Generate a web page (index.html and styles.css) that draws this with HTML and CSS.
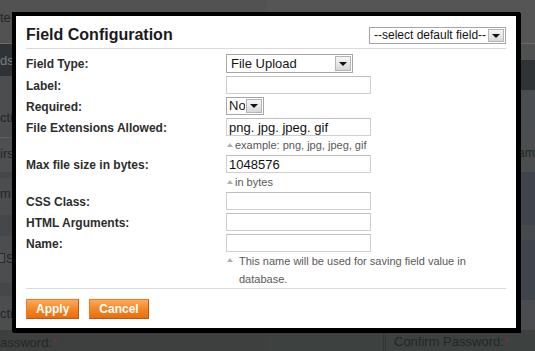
FILE: index.html
```html
<!DOCTYPE html>
<html lang="en">
<head>
  <meta charset="UTF-8" />
  <meta name="viewport" content="width=device-width, initial-scale=1.0"/>
  <title>Field Configuration</title>
  <link rel="stylesheet" href="styles.css">
</head>
<body>
  <!-- dimmed admin page behind the popup -->
  <div class="backdrop">
    <div class="bg-col left">
      <div class="band b-head"><span>te</span></div>
      <div class="band b-tabs"><span class="tab-text">ds</span></div>
      <div class="band b-sect"><span>cti</span></div>
      <div class="band b-first"><span>irs</span></div>
      <div class="band b-gap"></div>
      <div class="band b-name"><span>m</span></div>
      <div class="band b-gap2"></div>
      <div class="band b-check"><span class="check"></span><span>S</span></div>
      <div class="band b-gap3"></div>
      <div class="band b-sect2"><span>cti</span></div>
      <div class="band b-foot"><span>assword:<em>*</em></span></div>
    </div>
    <div class="bg-col right">
      <div class="band r-head"></div>
      <div class="band r-sub"></div>
      <div class="band r-tabs"></div>
      <div class="band r-blue"></div>
      <div class="band r-name"><span>am</span></div>
      <div class="band r-blue2"></div>
      <div class="band r-mid"></div>
      <div class="band r-blue3"></div>
      <div class="band r-low"></div>
      <div class="band r-foot"><span class="confirm">Confirm Password:<em>*</em></span></div>
    </div>
  </div>

  <div class="dialog">
    <div class="dialog-head">
      <h3>Field Configuration</h3>
      <div class="select select-default">
        <span class="select-text">--select default field--</span>
        <span class="select-btn"></span>
      </div>
    </div>

    <div class="form-list">
      <div class="row">
        <label>Field Type:</label>
        <div class="value">
          <div class="select select-type">
            <span class="select-text">File Upload</span>
            <span class="select-btn"></span>
          </div>
        </div>
      </div>
      <div class="row">
        <label>Label:</label>
        <div class="value"><input type="text" class="input-text" value=""></div>
      </div>
      <div class="row">
        <label>Required:</label>
        <div class="value">
          <div class="select select-small">
            <span class="select-text">No</span>
            <span class="select-btn"></span>
          </div>
        </div>
      </div>
      <div class="row has-note">
        <label>File Extensions Allowed:</label>
        <div class="value">
          <input type="text" class="input-text" value="png. jpg. jpeg. gif">
          <p class="note">example: png, jpg, jpeg, gif</p>
        </div>
      </div>
      <div class="row has-note">
        <label>Max file size in bytes:</label>
        <div class="value">
          <input type="text" class="input-text" value="1048576">
          <p class="note">in bytes</p>
        </div>
      </div>
      <div class="row">
        <label>CSS Class:</label>
        <div class="value"><input type="text" class="input-text" value=""></div>
      </div>
      <div class="row">
        <label>HTML Arguments:</label>
        <div class="value"><input type="text" class="input-text" value=""></div>
      </div>
      <div class="row">
        <label>Name:</label>
        <div class="value">
          <input type="text" class="input-text" value="">
          <p class="note note-long">This name will be used for saving field value in database.</p>
        </div>
      </div>
    </div>

    <div class="dialog-foot">
      <button class="btn">Apply</button>
      <button class="btn">Cancel</button>
    </div>
  </div>
</body>
</html>
```

FILE: styles.css
```css
* {
  box-sizing: border-box;
}

html, body {
  margin: 0;
  height: 100%;
}

body {
  position: relative;
  overflow: hidden;
  font-family: 'Liberation Sans', Arial, sans-serif;
  font-size: 12px;
  color: #2f2f2f;
  background: #4b4d4e;
}

/* ---- backdrop ---- */

.backdrop {
  display: flex;
  height: 351px;
  font-size: 13px;
  color: #242627;
  white-space: nowrap;
}

.bg-col {
  display: flex;
  flex-direction: column;
  overflow: hidden;
}

.bg-col.left { width: 267px; }
.bg-col.right { flex: 1; }

.band {
  display: flex;
  align-items: center;
  flex: none;
  line-height: 15px;
}

.band em {
  font-style: normal;
  color: #7d2f2f;
}

.b-head { height: 44px; padding-bottom: 8px; background: #525252; border-bottom: 1px solid #6b6b6b; }
.b-tabs { height: 32px; background: #303336; }
.tab-text { color: #7a7d80; }
.b-sect { height: 62px; padding-top: 21px; background: #4b4d4e; border-bottom: 1px solid #5e6060; }
.b-first { height: 34px; padding-bottom: 4px; background: #4d4f50; }
.b-gap { height: 6px; background: #454849; }
.b-name { height: 37px; padding-bottom: 7px; background: #4b4d4f; }
.b-gap2 { height: 21px; background: #45484a; }
.b-check { height: 47px; padding-bottom: 3px; background: #4b4d4e; gap: 1px; }
.b-gap3 { height: 13px; background: #45484a; }
.b-sect2 { height: 34px; background: #4b4d4e; }
.b-foot { flex: 1; padding-top: 3px; background: #3d403e; }

.check {
  width: 5px;
  height: 10px;
  border: 1px solid #2a2c2d;
  border-left: 0;
  background: #575959;
}

.r-head { height: 44px; background: #555555; border-bottom: 1px solid #6a6a6a; }
.r-sub { height: 16px; background: #4f5050; }
.r-tabs { height: 30px; background: #303336; }
.r-blue { height: 45px; background: #4a4d52; }
.r-name { height: 37px; padding-bottom: 1px; padding-left: 251px; background: #4b4d4e; font-size: 12px; }
.r-blue2 { height: 53px; background: #3f444c; }
.r-mid { height: 15px; background: #46494d; }
.r-blue3 { height: 60px; background: #3f444c; }
.r-low { height: 30px; background: #4a4c4f; }
.r-foot { flex: 1; padding-top: 3px; padding-left: 116px; background: #3d4240; }

.confirm {
  padding-left: 8px;
  border-left: 3px double #323735;
  line-height: 18px;
}

/* ---- popup ---- */

.dialog {
  position: absolute;
  left: 12px;
  top: 12px;
  width: 508px;
  padding: 8px 10px 9px;
  background: #fff;
  border: 4px solid #000;
  box-shadow: 1px 1px 0 #000;
}

.dialog-head {
  display: flex;
  justify-content: space-between;
  align-items: center;
  height: 25px;
  padding-bottom: 3px;
  border-bottom: 1px solid #dadada;
}

.dialog-head h3 {
  margin: 0;
  font-size: 16px;
  line-height: 20px;
  color: #1b1b1b;
}

.select {
  display: flex;
  height: 19px;
  border: 1px solid #a6a6a6;
  background: #fff;
  font-size: 13px;
  color: #141414;
}

.select-text {
  flex: 1;
  padding-left: 4px;
  line-height: 17px;
  white-space: nowrap;
  overflow: hidden;
}

.select-btn {
  flex: none;
  width: 16px;
  margin: 1px;
  display: flex;
  align-items: center;
  justify-content: center;
  border: 1px solid #b4b4b4;
  background: linear-gradient(#f6f6f6, #d8d8d8);
}

.select-btn::after {
  content: "";
  border-left: 4px solid transparent;
  border-right: 4px solid transparent;
  border-top: 4px solid #111;
}

.select-default {
  width: 137px;
  height: 17px;
  margin-top: 2px;
  font-size: 12px;
}

.select-default .select-text { line-height: 15px; }

.select-type { width: 127px; }

.select-small { width: 38px; height: 18px; }
.select-small .select-text { padding-left: 2px; line-height: 16px; }

.form-list {
  padding-top: 5px;
}

.row {
  display: flex;
  margin-bottom: 3px;
}

.row.has-note { margin-bottom: 1px; }
.row:last-child { margin-bottom: 0; }

.row label {
  flex: none;
  width: 200px;
  padding-top: 2px;
  line-height: 16px;
  font-weight: bold;
  color: #2d2d2d;
}

.value {
  flex: 1;
}

.input-text {
  display: block;
  width: 145px;
  height: 18px;
  margin: 0;
  padding: 0 2px;
  border: 1px solid #cfcfcf;
  border-top-color: #bfbfbf;
  font: 13px 'Liberation Sans', Arial, sans-serif;
  color: #111;
  background: #fff;
}

.note {
  display: flex;
  width: 274px;
  margin: 0;
  font-size: 11px;
  line-height: 18px;
  color: #595959;
}

.note::before {
  content: "";
  flex: none;
  height: 0;
  margin: 7px 2px 0 1px;
  border-left: 3px solid transparent;
  border-right: 3px solid transparent;
  border-bottom: 4px solid #b2b2b2;
}

.note-long::before {
  margin-top: 6px;
  margin-right: 6px;
}

.dialog-foot {
  display: flex;
  gap: 10px;
  padding-top: 10px;
  border-top: 1px solid #d6dce1;
}

.btn {
  height: 20px;
  padding: 0 9px;
  font: bold 12px 'Liberation Sans', Arial, sans-serif;
  color: #fff;
  border: 1px solid;
  border-color: #ec7a22 #c0580c #c0580c #ec7a22;
  background: linear-gradient(#fdab58, #f5892b 45%, #ea6c0e);
  cursor: pointer;
}
```
